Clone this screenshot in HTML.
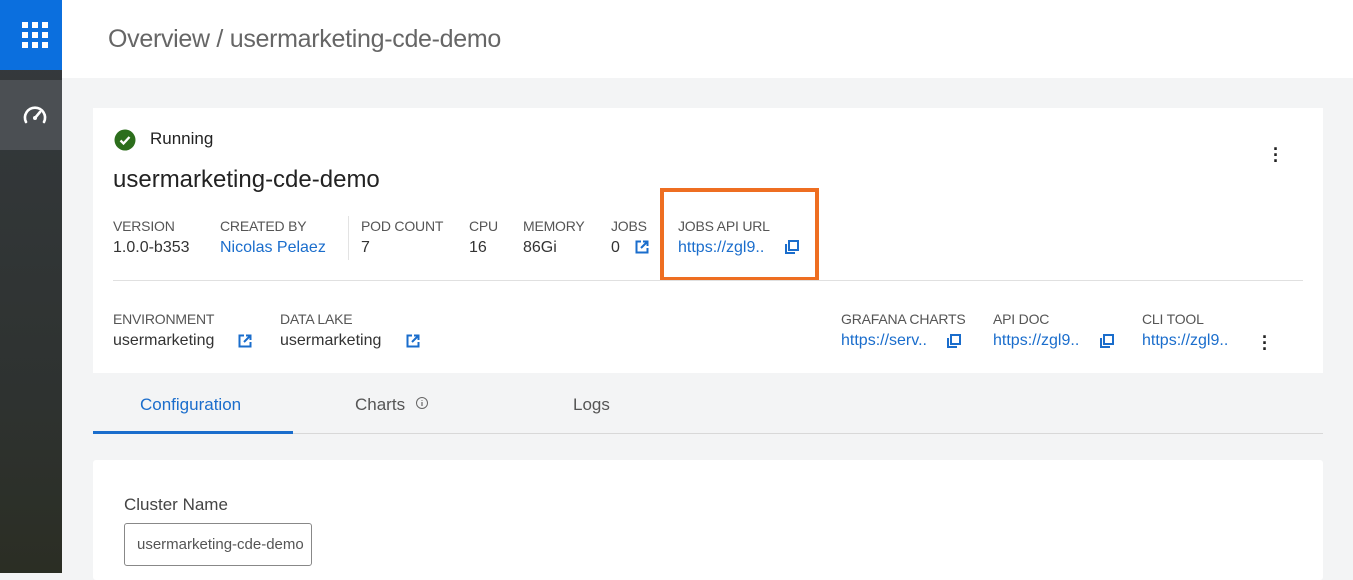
<!DOCTYPE html>
<html><head><meta charset="utf-8"><style>
*{margin:0;padding:0;box-sizing:border-box}
body{width:1353px;height:573px;overflow:hidden;background:#f3f4f5;font-family:"Liberation Sans",sans-serif;position:relative;color:#333}
.a{position:absolute;white-space:nowrap}
.lbl{font-size:14px;color:#555;text-transform:uppercase;letter-spacing:-0.2px}
.val{font-size:16px;color:#333}
.lnk{font-size:16px;color:#1a6dcc}
</style></head><body>
<div class="a" style="left:0;top:0;width:62px;height:573px;background:linear-gradient(#353a3e,#2e3230 70%,#2b2e24)"></div>
<div class="a" style="left:0;top:0;width:62px;height:70px;background:#0b6fde"></div>
<svg class="a" style="left:22px;top:22px" width="26" height="26"><g fill="#fff"><rect x="0" y="0" width="6" height="6"/><rect x="10" y="0" width="6" height="6"/><rect x="20" y="0" width="6" height="6"/><rect x="0" y="10" width="6" height="6"/><rect x="10" y="10" width="6" height="6"/><rect x="20" y="10" width="6" height="6"/><rect x="0" y="20" width="6" height="6"/><rect x="10" y="20" width="6" height="6"/><rect x="20" y="20" width="6" height="6"/></g></svg>
<div class="a" style="left:0;top:80px;width:62px;height:70px;background:#4b4f53"></div>
<svg class="a" style="left:22px;top:103px" width="26" height="22"><path d="M4 19 A10 10 0 1 1 22 19" fill="none" stroke="#fff" stroke-width="2.6" stroke-linecap="round"/><path d="M13 15 L18 9" stroke="#fff" stroke-width="2.6" stroke-linecap="round"/><circle cx="13" cy="15" r="2" fill="#fff"/></svg>
<div class="a" style="left:62px;top:0;width:1291px;height:78px;background:#fff"></div>
<div class="a" style="left:108px;top:25px;font-size:25px;color:#666;letter-spacing:-0.3px">Overview / usermarketing-cde-demo</div>

<div class="a" style="left:93px;top:108px;width:1230px;height:265px;background:#fff"></div>
<svg class="a" style="left:114px;top:129px" width="22" height="22"><circle cx="11" cy="11" r="10.5" fill="#2c6e1c"/><path d="M6.5 11.5 L9.5 14.5 L15.5 8" fill="none" stroke="#fff" stroke-width="2.3"/></svg>
<div class="a" style="left:150px;top:129px;font-size:17px;color:#222">Running</div>
<div class="a" style="left:113px;top:166px;font-size:24px;color:#222;font-weight:500">usermarketing-cde-demo</div>
<div class="a" style="left:1273px;top:146px;font-size:18px;font-weight:bold;color:#222;line-height:6px">·<br>·<br>·</div>

<div class="a lbl" style="left:113px;top:218px">Version</div><div class="a val" style="left:113px;top:239px">1.0.0-b353</div>
<div class="a lbl" style="left:220px;top:218px">Created By</div><div class="a lnk" style="left:220px;top:239px">Nicolas Pelaez</div>
<div class="a" style="left:348px;top:216px;width:1px;height:44px;background:#e3e3e3"></div>
<div class="a lbl" style="left:361px;top:218px">Pod Count</div><div class="a val" style="left:361px;top:239px">7</div>
<div class="a lbl" style="left:469px;top:218px">CPU</div><div class="a val" style="left:469px;top:239px">16</div>
<div class="a lbl" style="left:523px;top:218px">Memory</div><div class="a val" style="left:523px;top:239px">86Gi</div>
<div class="a lbl" style="left:611px;top:218px">Jobs</div><div class="a val" style="left:611px;top:239px">0</div>
<svg class="a" style="left:635px;top:240px" width="14" height="14"><path d="M6 1.5H1.5V12.5H12.5V8M8 1.5H12.5V6M12.5 1.5L6 8" fill="none" stroke="#1a6dcc" stroke-width="2"/></svg>
<div class="a lbl" style="left:678px;top:218px">Jobs API URL</div><div class="a lnk" style="left:678px;top:239px">https://zgl9..</div>
<svg class="a" style="left:785px;top:240px" width="14" height="14"><rect x="4" y="1" width="9" height="9" fill="none" stroke="#1a6dcc" stroke-width="2"/><path d="M1 4V13H10" fill="none" stroke="#1a6dcc" stroke-width="2"/></svg>
<div class="a" style="left:660px;top:188px;width:159px;height:93px;border:4px solid #ee6e21"></div>
<div class="a" style="left:113px;top:280px;width:1190px;height:1px;background:#e0e0e0"></div>

<div class="a lbl" style="left:113px;top:311px">Environment</div><div class="a val" style="left:113px;top:332px">usermarketing</div>
<svg class="a" style="left:238px;top:334px" width="14" height="14"><path d="M6 1.5H1.5V12.5H12.5V8M8 1.5H12.5V6M12.5 1.5L6 8" fill="none" stroke="#1a6dcc" stroke-width="2"/></svg>
<div class="a lbl" style="left:280px;top:311px">Data Lake</div><div class="a val" style="left:280px;top:332px">usermarketing</div>
<svg class="a" style="left:406px;top:334px" width="14" height="14"><path d="M6 1.5H1.5V12.5H12.5V8M8 1.5H12.5V6M12.5 1.5L6 8" fill="none" stroke="#1a6dcc" stroke-width="2"/></svg>
<div class="a lbl" style="left:841px;top:311px">Grafana Charts</div><div class="a lnk" style="left:841px;top:332px">https://serv..</div>
<svg class="a" style="left:947px;top:334px" width="14" height="14"><rect x="4" y="1" width="9" height="9" fill="none" stroke="#1a6dcc" stroke-width="2"/><path d="M1 4V13H10" fill="none" stroke="#1a6dcc" stroke-width="2"/></svg>
<div class="a lbl" style="left:993px;top:311px">API Doc</div><div class="a lnk" style="left:993px;top:332px">https://zgl9..</div>
<svg class="a" style="left:1100px;top:334px" width="14" height="14"><rect x="4" y="1" width="9" height="9" fill="none" stroke="#1a6dcc" stroke-width="2"/><path d="M1 4V13H10" fill="none" stroke="#1a6dcc" stroke-width="2"/></svg>
<div class="a lbl" style="left:1142px;top:311px">CLI Tool</div><div class="a lnk" style="left:1142px;top:332px">https://zgl9..</div>
<div class="a" style="left:1262px;top:334px;font-size:18px;font-weight:bold;color:#222;line-height:6px">·<br>·<br>·</div>

<div class="a" style="left:93px;top:433px;width:1230px;height:1px;background:#d8d8d8"></div>
<div class="a" style="left:93px;top:431px;width:200px;height:3px;background:#1a6dcc"></div>
<div class="a" style="left:140px;top:395px;font-size:17px;color:#1a6dcc">Configuration</div>
<div class="a" style="left:355px;top:395px;font-size:17px;color:#555">Charts</div>
<svg class="a" style="left:415px;top:396px" width="14" height="14"><circle cx="7" cy="7" r="5.5" fill="none" stroke="#666" stroke-width="1"/><path d="M7 6V10M7 4V4.8" stroke="#666" stroke-width="1.2"/></svg>
<div class="a" style="left:573px;top:395px;font-size:17px;color:#555">Logs</div>

<div class="a" style="left:93px;top:460px;width:1230px;height:120px;background:#fff;border-radius:3px"></div>
<div class="a" style="left:124px;top:495px;font-size:17px;color:#444;font-weight:500">Cluster Name</div>
<div class="a" style="left:124px;top:523px;width:188px;height:43px;border:1px solid #888;border-radius:3px;overflow:hidden;font-size:15px;color:#555;padding:12px 0 0 12px">usermarketing-cde-demo</div>
</body></html>
